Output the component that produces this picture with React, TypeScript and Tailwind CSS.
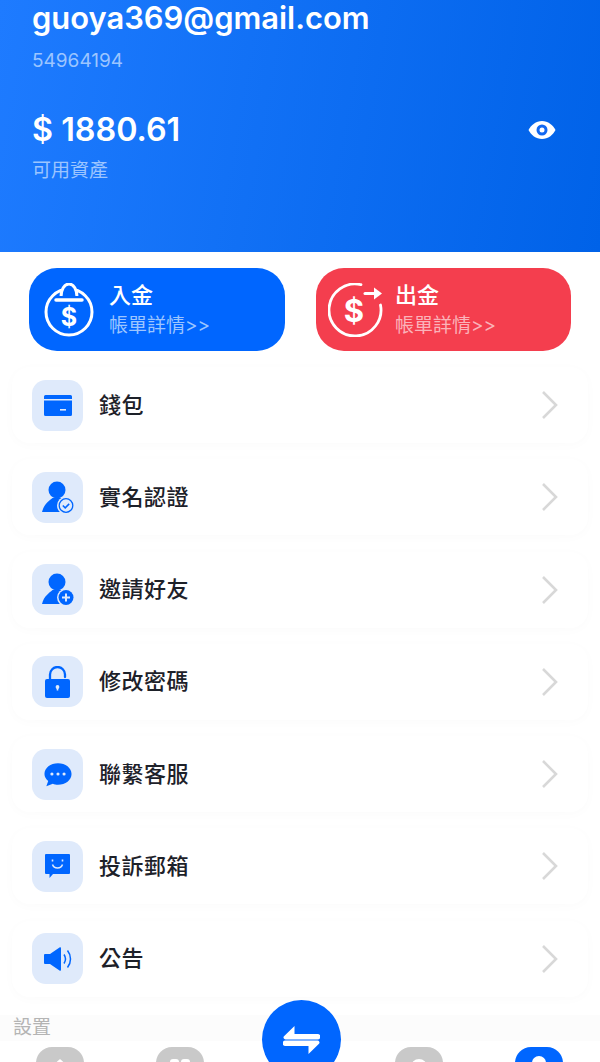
import React from 'react';

const cjk = "font-['Inter','Noto_Sans_CJK_TC',sans-serif]";

const PersonIcon = ({ badge }: { badge: 'check' | 'plus' }) => (
  <svg width="34" height="33" viewBox="0 0 34 33">
    <circle cx="16" cy="9" r="8.500" fill="#0066ff" />
    <path d="M1 31C3 23 8 20 11.500 17h9c3 2.500 5 4 7 14z" fill="#0066ff" />
    <circle cx="25" cy="24.500" r="9" fill="#dfeafb" />
    {badge === 'check' ? (
      <>
        <circle cx="25" cy="24.500" r="6.800" fill="none" stroke="#0066ff" strokeWidth="1.300" />
        <path d="M21.800 24.500l2.400 2.400 4-4" fill="none" stroke="#0066ff" strokeWidth="1.500" />
      </>
    ) : (
      <>
        <circle cx="25" cy="24.500" r="7.500" fill="#0066ff" />
        <path d="M25 20.500v8M21 24.500h8" stroke="#dfeafb" strokeWidth="2" />
      </>
    )}
  </svg>
);

const rows: { label: string; icon: React.ReactNode }[] = [
  {
    label: '錢包',
    icon: (
      <svg width="28" height="21" viewBox="0 0 28 21">
        <path d="M1.500 0h25A1.500 1.500 0 0 1 28 1.500V4H0V1.500A1.500 1.500 0 0 1 1.500 0z" fill="#0066ff" />
        <path d="M0 5.500h28v14a1.500 1.500 0 0 1-1.500 1.500h-25A1.500 1.500 0 0 1 0 19.500z" fill="#0066ff" />
        <rect x="16" y="14" width="6" height="1.600" fill="#dfeafb" />
      </svg>
    ),
  },
  { label: '實名認證', icon: <PersonIcon badge="check" /> },
  { label: '邀請好友', icon: <PersonIcon badge="plus" /> },
  {
    label: '修改密碼',
    icon: (
      <svg width="25" height="32" viewBox="0 0 25 32">
        <path d="M5 14V8.500a7.500 7.500 0 0 1 15 0V11" fill="none" stroke="#0066ff" strokeWidth="2.300" strokeLinecap="round" />
        <rect x="0" y="13" width="25" height="19" rx="2" fill="#0066ff" />
        <circle cx="12.500" cy="21" r="1.900" fill="#dfeafb" />
        <rect x="11.700" y="21" width="1.600" height="3.500" fill="#dfeafb" />
      </svg>
    ),
  },
  {
    label: '聯繫客服',
    icon: (
      <svg width="28" height="25" viewBox="0 0 30 26">
        <path d="M15 1c8 0 14.500 5 14.500 11.500S23 24 15 24c-2 0-4-.3-5.500-1L2.500 25.500 4.500 20C2 18 .5 15.500.5 12.500.5 6 7 1 15 1z" fill="#0066ff" />
        <circle cx="8.500" cy="12.500" r="1.700" fill="#dfeafb" />
        <circle cx="15" cy="12.500" r="1.700" fill="#dfeafb" />
        <circle cx="21.500" cy="12.500" r="1.700" fill="#dfeafb" />
      </svg>
    ),
  },
  {
    label: '投訴郵箱',
    icon: (
      <svg width="25" height="24" viewBox="0 0 25 24">
        <path d="M1 0h23a1 1 0 0 1 1 1v18a1 1 0 0 1-1 1H8l-3.500 4v-4H1a1 1 0 0 1-1-1V1a1 1 0 0 1 1-1z" fill="#0066ff" />
        <path d="M7.500 5.500v2M17.500 5.500v2" stroke="#dfeafb" strokeWidth="1.600" />
        <path d="M7.500 10.500c1.500 4.500 8.500 4.500 10 0" fill="none" stroke="#dfeafb" strokeWidth="1.500" />
      </svg>
    ),
  },
  {
    label: '公告',
    icon: (
      <svg width="28" height="24" viewBox="0 0 28 24">
        <path d="M1 7h5l9.500-6.500c1-.6 1.500 0 1.500 1v21c0 1-.5 1.600-1.500 1L6 17H1a1 1 0 0 1-1-1V8a1 1 0 0 1 1-1z" fill="#0066ff" />
        <path d="M20 7.500c2 3 2 6 0 9" fill="none" stroke="#0066ff" strokeWidth="1.500" />
        <path d="M23.500 3.500c4 5 4 12 0 17" fill="none" stroke="#0066ff" strokeWidth="1.500" />
      </svg>
    ),
  },
];

const Row = ({ label, icon }: { label: string; icon: React.ReactNode }) => (
  <div className="flex h-[76px] items-center rounded-[18px] bg-white pl-5 pr-[29px] shadow-[0_2px_12px_rgba(0,0,0,0.02)]">
    <div className="flex h-[51px] w-[51px] items-center justify-center rounded-[14px] bg-[#dfeafb]">{icon}</div>
    <span className="ml-4 flex-1 text-[22px] font-medium tracking-[0.5px] text-[#1d2129]">{label}</span>
    <svg width="18" height="30" viewBox="0 0 18 30" fill="none">
      <path d="M2 2l13 13L2 28" stroke="#d8d8d8" strokeWidth="2.600" />
    </svg>
  </div>
);

export default function App() {
  return (
    <div className={`relative h-[1062px] w-[600px] overflow-hidden bg-white ${cjk}`}>
      <header className="h-[252px] bg-[linear-gradient(100deg,#1e7bff,#0062e8)] px-8 text-white">
        <div className="text-[30.9px] font-semibold leading-[36px]">guoya369@gmail.com</div>
        <div className="mt-[15px] text-[19px] leading-[20px] text-[#9cc5ff]">54964194</div>
        <div className="mt-[39px] flex items-center justify-between pr-[12px]">
          <div className="text-[32.3px] font-semibold leading-[40px]">$ 1880.61</div>
          <svg width="28" height="20" viewBox="0 0 28 20">
            <path d="M14 1C8 1 3 5 .5 10 3 15 8 19 14 19s11-4 13.500-9C25 5 20 1 14 1z" fill="#fff" />
            <circle cx="14" cy="10" r="5.500" fill="#1168f2" />
            <circle cx="14" cy="10" r="2.500" fill="#fff" />
          </svg>
        </div>
        <div className="mt-[8px] text-[19px] leading-[26px] text-[#9cc5ff]">可用資產</div>
      </header>

      <div className="mt-4 flex justify-between px-[29px]">
        <div className="flex h-[83px] w-[256px] items-center rounded-[28px] bg-[#0066ff] pl-[14px] text-white">
          <svg width="52" height="54" viewBox="0 0 52 54" fill="none">
            <circle cx="26" cy="29" r="23" stroke="#fff" strokeWidth="3" />
            <path d="M18 16C17 -4 35 -4 34 16z" fill="#0066ff" stroke="#fff" strokeWidth="3" />
            <path d="M12 17h28" stroke="#0066ff" strokeWidth="8" />
            <path d="M13 17h26" stroke="#fff" strokeWidth="3.500" strokeLinecap="round" />
            <text x="26" y="43" textAnchor="middle" fill="#fff" fontSize="25" fontWeight="700" fontFamily="Inter">$</text>
          </svg>
          <div className="ml-[14px] pt-[1px]">
            <div className="text-[22px] font-medium leading-[28px]">入金</div>
            <div className="mt-[3px] text-[19px] leading-[28px] text-[#9cc5ff]">帳單詳情&gt;&gt;</div>
          </div>
        </div>
        <div className="flex h-[83px] w-[255px] items-center rounded-[28px] bg-[#f43e4e] pl-[12px] text-white">
          <svg width="56" height="54" viewBox="0 0 56 54" fill="none">
            <path d="M33 1.700A26 26 0 1 0 52.500 22" stroke="#fff" strokeWidth="2.800" strokeLinecap="round" />
            <path d="M37 10.500h10" stroke="#fff" strokeWidth="3" strokeLinecap="round" />
            <path d="M46 4.500l8 6-8 6z" fill="#fff" />
            <text x="26" y="39" textAnchor="middle" fill="#fff" fontSize="31" fontWeight="700" fontFamily="Inter">$</text>
          </svg>
          <div className="ml-[11px] pt-[1px]">
            <div className="text-[22px] font-medium leading-[28px]">出金</div>
            <div className="mt-[3px] text-[19px] leading-[28px] text-[#fbb3ba]">帳單詳情&gt;&gt;</div>
          </div>
        </div>
      </div>

      <div className="mx-3 mt-4 flex flex-col gap-[16.3px]">
        {rows.map((r) => (
          <Row key={r.label} label={r.label} icon={r.icon} />
        ))}
      </div>

      <div className="mt-[18px] bg-[#fcfcfc] px-[13px] text-[19px] leading-[26px] text-[#b4b4b4]">設置</div>
      <nav className="mt-[6px] flex justify-between pl-[36px] pr-[37px]">
        <div className="flex h-[48px] w-[48px] justify-center rounded-[16px] bg-[#c9c9c9] pt-[12px]">
          <svg width="24" height="24" viewBox="0 0 24 24">
            <path d="M12 0l10 9v13H2V9z" fill="#fff" />
          </svg>
        </div>
        <div className="flex h-[48px] w-[48px] justify-center rounded-[16px] bg-[#c9c9c9] pt-[12px]">
          <svg width="24" height="24" viewBox="0 0 24 24">
            <rect x="2" y="0" width="9" height="9" rx="3" fill="#fff" />
            <rect x="13" y="0" width="9" height="9" rx="3" fill="#fff" />
          </svg>
        </div>
        <div className="w-[48px]" />
        <div className="flex h-[48px] w-[48px] justify-center rounded-[16px] bg-[#c9c9c9] pt-[12px]">
          <svg width="24" height="24" viewBox="0 0 24 24">
            <circle cx="12" cy="8" r="8" fill="#fff" />
          </svg>
        </div>
        <div className="flex h-[48px] w-[48px] justify-center rounded-[16px] bg-[#0066ff] pt-[9px]">
          <svg width="24" height="24" viewBox="0 0 24 24">
            <circle cx="12" cy="7" r="7" fill="#fff" />
          </svg>
        </div>
      </nav>

      <div className="absolute left-[262px] top-[1000px] flex h-[79px] w-[79px] items-center justify-center rounded-full bg-[#0066ff]">
        <svg width="37" height="28" viewBox="0 0 37 28">
          <path d="M11.500 0v8h23a2.700 2.700 0 0 1 0 5.500H2.500A2 2 0 0 1 1 10.200z" fill="#fff" />
          <path d="M25.500 28v-8h-23a2.700 2.700 0 0 1 0-5.500h32a2 2 0 0 1 1.500 3.300z" fill="#fff" />
        </svg>
      </div>
    </div>
  );
}
